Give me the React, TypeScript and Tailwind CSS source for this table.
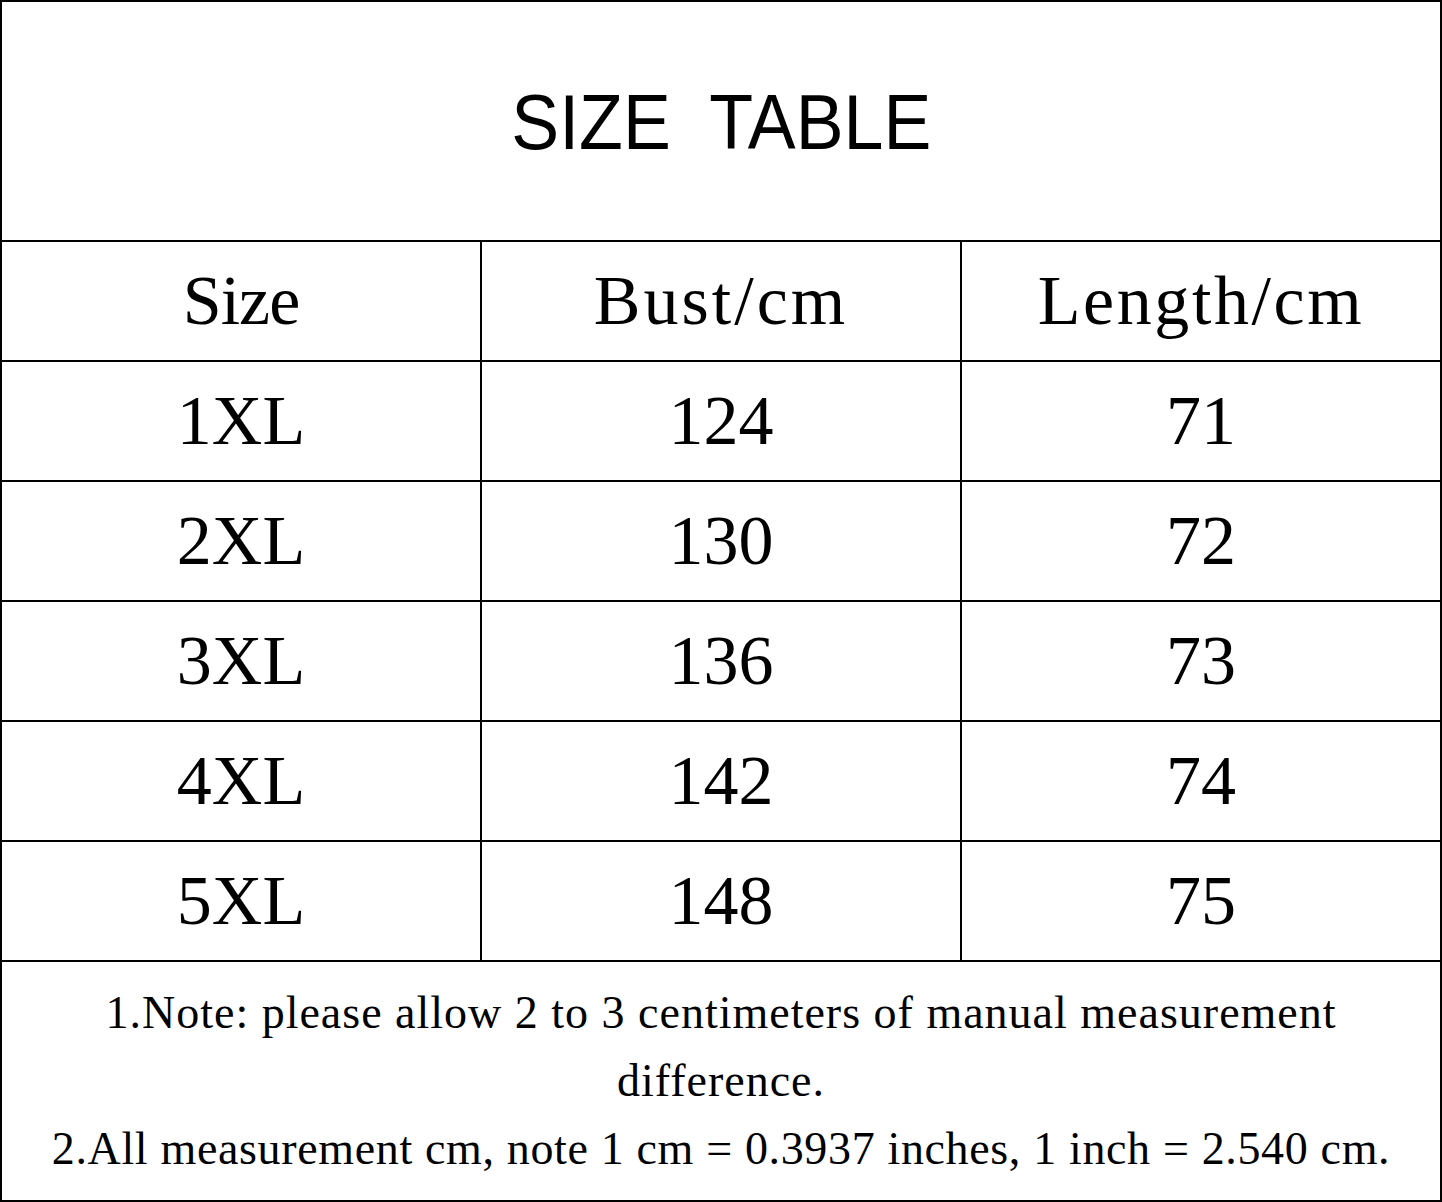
import React from "react";

const rows = [
  ["1XL", "124", "71"],
  ["2XL", "130", "72"],
  ["3XL", "136", "73"],
  ["4XL", "142", "74"],
  ["5XL", "148", "75"],
];

function Row({ cells, header }: { cells: string[]; header?: boolean }) {
  return (
    <div className="flex h-[120px] border-b-2 border-black">
      <div className="w-[480px] shrink-0 border-r-2 border-black flex items-center justify-center">
        <span className={header ? "tracking-[-1px]" : ""}>{cells[0]}</span>
      </div>
      <div className="w-[480px] shrink-0 border-r-2 border-black flex items-center justify-center">
        <span className={header ? "tracking-[3px]" : ""}>{cells[1]}</span>
      </div>
      <div className="flex-1 flex items-center justify-center">
        <span className={header ? "tracking-[2.6px]" : ""}>{cells[2]}</span>
      </div>
    </div>
  );
}

export default function App() {
  return (
    <div className="w-[1442px] h-[1202px] bg-white">
      <div className="w-full h-full border-2 border-black flex flex-col text-black">
        <div className="h-[240px] shrink-0 border-b-2 border-black flex items-center justify-center pt-[2px]">
          <span
            className="text-[78px] leading-none whitespace-pre scale-x-[0.92] inline-block"
            style={{ fontFamily: '"Liberation Sans", Arial, sans-serif' }}
          >
            {"SIZE  TABLE"}
          </span>
        </div>
        <div
          className="flex flex-col text-[70px] leading-none"
          style={{ fontFamily: '"Liberation Serif", "Times New Roman", serif' }}
        >
          <Row cells={["Size", "Bust/cm", "Length/cm"]} header />
          {rows.map((r, i) => (
            <Row key={i} cells={r} />
          ))}
        </div>
        <div
          className="flex-1 flex flex-col items-center justify-center text-center text-[46px] leading-[68px]"
          style={{ fontFamily: '"Liberation Serif", "Times New Roman", serif' }}
        >
          <div className="tracking-[1px]">
            1.Note: please allow 2 to 3 centimeters of manual measurement
            <br />
            difference.
          </div>
          <div className="tracking-[0.65px]">2.All measurement cm, note 1 cm = 0.3937 inches, 1 inch = 2.540 cm.</div>
        </div>
      </div>
    </div>
  );
}
